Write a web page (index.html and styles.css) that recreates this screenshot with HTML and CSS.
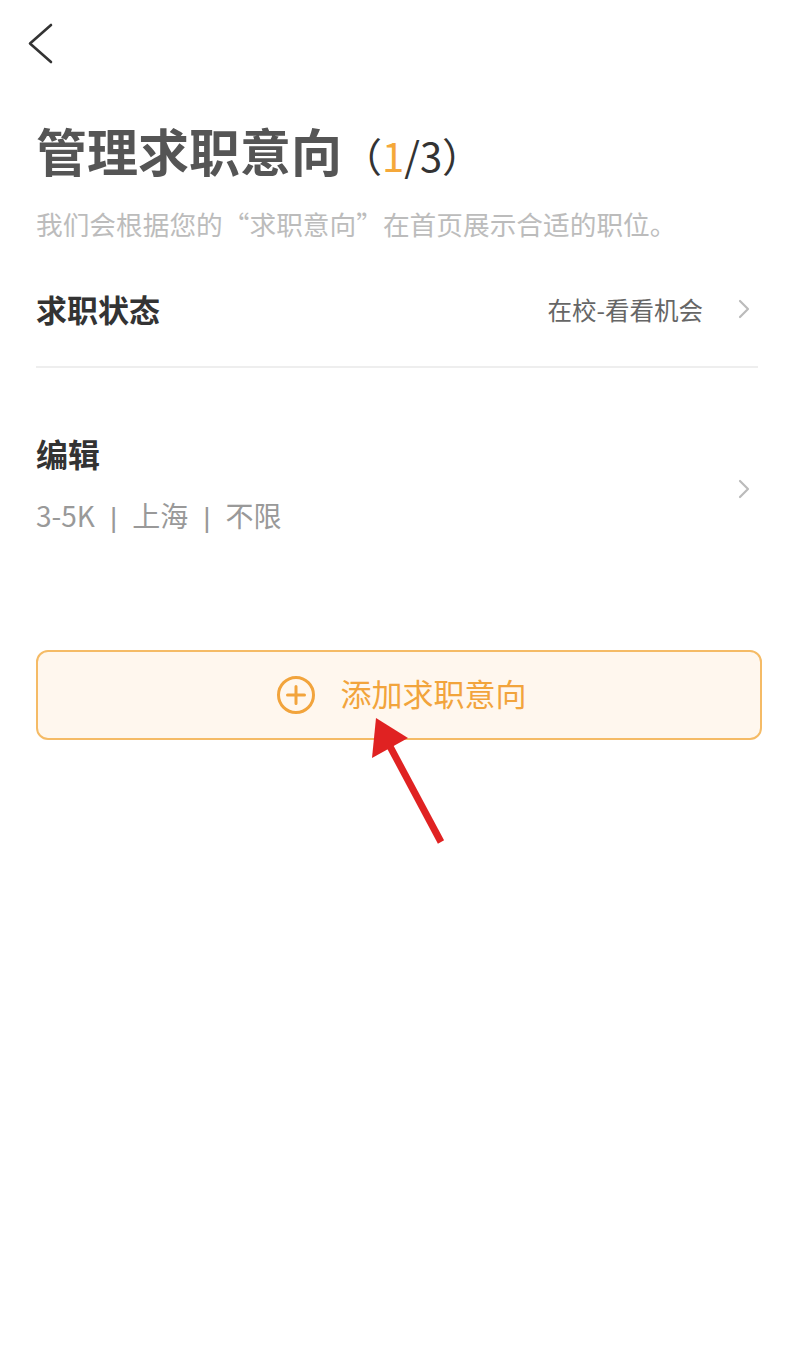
FILE: index.html
```html
<!DOCTYPE html>
<html lang="zh-CN">
<head>
<meta charset="utf-8">
<title>管理求职意向</title>
<link rel="stylesheet" href="styles.css">
</head>
<body>
<div class="page">
  <div class="nav">
    <svg class="back" width="26" height="42" viewBox="0 0 26 42"><polyline points="23,2 2,20.5 23,39" fill="none" stroke="#333" stroke-width="2.6" stroke-linecap="round" stroke-linejoin="round"/></svg>
  </div>
  <div class="content">
    <h1 class="title">管理求职意向<span class="count">（<span class="cur">1</span>/3）</span></h1>
    <p class="subtitle">我们会根据您的“求职意向”在首页展示合适的职位。</p>
    <div class="row status">
      <span class="row-label">求职状态</span>
      <span class="row-value">在校-看看机会</span>
      <svg class="chev" width="12" height="20" viewBox="0 0 12 20"><polyline points="2,2 10,10 2,18" fill="none" stroke="#bbb" stroke-width="2.2" stroke-linecap="round" stroke-linejoin="round"/></svg>
    </div>
    <div class="row intent">
      <div class="intent-text">
        <div class="row-label">编辑</div>
        <div class="intent-desc">3-5K<span class="sep">|</span>上海<span class="sep">|</span>不限</div>
      </div>
      <svg class="chev intent-chev" width="12" height="20" viewBox="0 0 12 20"><polyline points="2,2 10,10 2,18" fill="none" stroke="#bbb" stroke-width="2.2" stroke-linecap="round" stroke-linejoin="round"/></svg>
    </div>
    <div class="add-btn">
      <svg class="plus" width="40" height="40" viewBox="0 0 40 40"><circle cx="20" cy="20" r="17.5" fill="none" stroke="#f2a43c" stroke-width="3"/><path d="M20 11.5v17M11.5 20h17" stroke="#f2a43c" stroke-width="3" stroke-linecap="round"/></svg>
      <span class="add-label">添加求职意向</span>
    </div>
  </div>
  <svg class="arrow" width="100" height="140" viewBox="0 0 100 140"><line x1="85" y1="128" x2="30" y2="25" stroke="#e02222" stroke-width="7" stroke-linecap="butt"/><polygon points="20,4 52,24 16,44" fill="#e02222"/></svg>
</div>
</body>
</html>
```

FILE: styles.css
```css
html, body {
  margin: 0;
  padding: 0;
  background: #fff;
}
body {
  font-family: "Noto Sans CJK SC", "Noto Sans", sans-serif;
}
.page {
  position: relative;
  width: 789px;
  min-height: 1348px;
}
.nav {
  height: 100px;
  padding: 23px 0 0 28px;
  box-sizing: border-box;
}
.back {
  display: block;
}
.content {
  padding: 0 27px 0 36px;
}
.title {
  margin: 0;
  font-size: 51px;
  line-height: 100px;
  height: 96px;
  font-weight: 700;
  color: #555;
  display: flex;
  align-items: baseline;
}
.count {
  font-size: 40px;
  font-weight: 400;
  color: #333;
  margin-left: 0;
}
.cur {
  color: #f5a83a;
}
.subtitle {
  margin: 0;
  font-size: 26.7px;
  line-height: 56px;
  color: #bcbcbc;
  white-space: nowrap;
}
.row {
  display: flex;
  align-items: center;
}
.status {
  height: 114px;
  border-bottom: 2px solid #eeeeee;
  margin-right: 4px;
}
.row-label {
  font-size: 31px;
  font-weight: 700;
  color: #333;
  line-height: 44px;
}
.status .row-label {
  flex: 1;
}
.row-value {
  font-size: 24.5px;
  color: #666;
  margin-right: 35px;
}
.chev {
  display: block;
  margin-right: 8px;
}
.intent {
  height: 282px;
  box-sizing: border-box;
  padding-top: 63px;
  align-items: flex-start;
  justify-content: space-between;
  margin-right: 4px;
}
.intent .row-label {
  font-size: 32px;
}
.intent-chev {
  margin-top: 48px;
}
.intent-text {
  display: flex;
  flex-direction: column;
  gap: 20px;
}
.intent-desc {
  font-size: 28px;
  color: #999;
  line-height: 40px;
}
.sep {
  margin: 0 15px;
  font-family: "Liberation Sans", sans-serif;
}
.add-btn {
  height: 86px;
  border: 2px solid #f5bb66;
  border-radius: 12px;
  background: #fff7ee;
  display: flex;
  align-items: center;
  justify-content: center;
  gap: 25px;
  color: #f2a43c;
  font-size: 31px;
  padding-left: 4px;
}
.add-label {
  margin-bottom: 6px;
}
.plus {
  display: block;
}
.arrow {
  position: absolute;
  left: 356px;
  top: 714px;
}
```
